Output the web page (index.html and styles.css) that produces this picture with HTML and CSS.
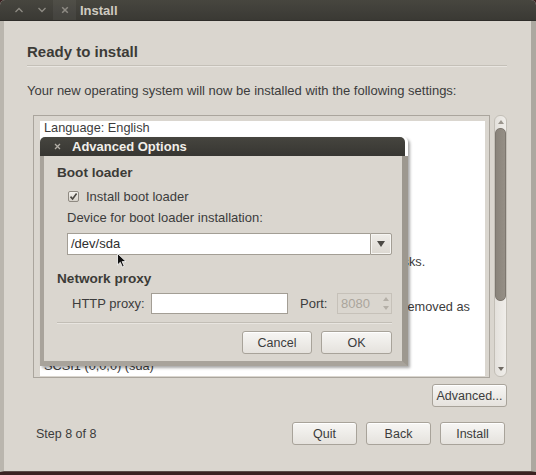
FILE: index.html
```html
<!DOCTYPE html>
<html lang="en">
<head>
<meta charset="utf-8">
<title>Install</title>
<link rel="stylesheet" href="styles.css">
</head>
<body>
<div class="window">
  <div class="titlebar">
    <span class="wbtn"><svg width="10" height="6" viewBox="0 0 10 6"><path d="M1.5 5 L5 1.5 L8.5 5" fill="none" stroke="#8e8b84" stroke-width="1.3"/></svg></span>
    <span class="wbtn"><svg width="10" height="6" viewBox="0 0 10 6"><path d="M1.5 1 L5 4.5 L8.5 1" fill="none" stroke="#8e8b84" stroke-width="1.3"/></svg></span>
    <span class="wbtn close"><svg width="8" height="8" viewBox="0 0 8 8"><path d="M1.2 1.2 L6.8 6.8 M6.8 1.2 L1.2 6.8" fill="none" stroke="#8e8b84" stroke-width="1.5"/></svg></span>
    <span class="wtitle">Install</span>
  </div>
  <div class="main">
    <h1 class="heading">Ready to install</h1>
    <hr class="sep">
    <p class="desc">Your new operating system will now be installed with the following settings:</p>
    <div class="summary">
      <div class="frame">
        <div class="textview">
          <div class="tl">Language: English</div>
          <div class="tl">Keyboard layout: USA</div>
          <div class="tl">Name: Ubuntu User</div>
          <div class="tl">Login name: ubuntu</div>
          <div class="tl">Location: America/New_York</div>
          <div class="tl">Migration Assistant:</div>
          <div class="tl">&nbsp;</div>
          <div class="tl">Partitions:</div>
          <div class="tl">&nbsp;</div>
          <div class="tl">If you continue, the changes listed below will be written to the disks.</div>
          <div class="tl">Otherwise, you will be able to make further changes manually.</div>
          <div class="tl">&nbsp;</div>
          <div class="tl">WARNING: This will destroy all data on any partitions you have removed as</div>
          <div class="tl">well as on the partitions that are going to be formatted.</div>
          <div class="tl">&nbsp;</div>
          <div class="tl">The partition tables of the following devices are changed:</div>
          <div class="tl">SCSI1 (0,0,0) (sda)</div>
        </div>
      </div>
      <div class="vscroll">
        <span class="sarrow"><svg width="6" height="4" viewBox="0 0 6 4"><path d="M0 4 L3 0 L6 4 Z" fill="#9a958d"/></svg></span>
        <div class="thumb"></div>
        <span class="sarrow bottom"><svg width="6" height="4" viewBox="0 0 6 4"><path d="M0 0 L3 4 L6 0 Z" fill="#6f6a63"/></svg></span>
      </div>
    </div>
    <div class="adv-row"><button class="btn adv">Advanced...</button></div>
    <div class="footer">
      <span class="step">Step 8 of 8</span>
      <div class="footer-btns">
        <button class="btn fbtn">Quit</button>
        <button class="btn fbtn">Back</button>
        <button class="btn fbtn">Install</button>
      </div>
    </div>
  </div>

  <div class="dialog">
    <div class="dlg-title">
      <span class="dlg-x"><svg width="7" height="7" viewBox="0 0 7 7"><path d="M1 1 L6 6 M6 1 L1 6" fill="none" stroke="#b3afa7" stroke-width="1.3"/></svg></span>
      <span class="dlg-name">Advanced Options</span>
    </div>
    <div class="dlg-body">
      <div class="sect">Boot loader</div>
      <div class="check-row">
        <span class="checkbox"><svg width="9" height="9" viewBox="0 0 9 9"><path d="M1.5 4.6 L3.6 7 L7.6 1.6" fill="none" stroke="#4a4742" stroke-width="1.6"/></svg></span>
        <span>Install boot loader</span>
      </div>
      <div class="field-label">Device for boot loader installation:</div>
      <div class="combo">
        <div class="combo-entry">/dev/sda</div>
        <div class="combo-btn"><svg width="8" height="6" viewBox="0 0 8 6"><path d="M0 0 L8 0 L4 6 Z" fill="#4c4a45"/></svg></div>
      </div>
      <div class="sect net">Network proxy</div>
      <div class="proxy-row">
        <span class="plabel">HTTP proxy:</span>
        <div class="entry proxy"></div>
        <span class="port-label">Port:</span>
        <div class="spin">
          <span class="spin-val">8080</span>
          <span class="spin-arrows">
            <svg width="6" height="4" viewBox="0 0 6 4"><path d="M0 4 L3 0 L6 4 Z" fill="#b4afa7"/></svg>
            <svg width="6" height="4" viewBox="0 0 6 4"><path d="M0 0 L3 4 L6 0 Z" fill="#b4afa7"/></svg>
          </span>
        </div>
      </div>
      <hr class="dsep">
      <div class="dlg-btns">
        <button class="btn cancel">Cancel</button>
        <button class="btn ok">OK</button>
      </div>
    </div>
  </div>

  <svg class="cursor" width="11" height="16" viewBox="0 0 11 16"><path d="M0.5 0.5 L0.5 12 L3.3 9.3 L5.4 14 L7.2 13.2 L5.2 8.6 L9 8.6 Z" fill="#111" stroke="#fff" stroke-width="0.8"/></svg>
</div>
</body>
</html>
```

FILE: styles.css
```css
* { box-sizing: border-box; }
html, body { margin: 0; padding: 0; }
body {
  width: 536px;
  height: 475px;
  overflow: hidden;
  background: #3b2222;
  font-family: "Liberation Sans", Arial, sans-serif;
  color: #3c3c3c;
}
.window {
  position: relative;
  width: 536px;
  height: 472px;
  display: flex;
  flex-direction: column;
  background: #dad6cf;
  border-radius: 5px 5px 0 0;
  overflow: hidden;
}
.titlebar {
  height: 21px;
  flex: none;
  display: flex;
  align-items: center;
  padding-left: 7px;
  background: linear-gradient(#47463f, #3a3934);
  border-bottom: 1px solid #2e2d29;
}
.wbtn {
  width: 23px;
  height: 20px;
  display: flex;
  align-items: center;
  justify-content: center;
}
.wbtn.close { background: rgba(255, 255, 255, 0.05); }
.wtitle {
  margin-left: 4px;
  font-weight: bold;
  font-size: 13px;
  color: #cfcbc1;
}
.main {
  flex: 1;
  display: flex;
  flex-direction: column;
  border-left: 4px solid #bab6ae;
  border-right: 5px solid #aca8a0;
  border-bottom: 1px solid #5b4a47;
  padding: 0 24px 0 23px;
}
.heading {
  margin: 22px 0 0;
  font-size: 15px;
  line-height: 18px;
  font-weight: bold;
  color: #3c3b37;
}
.sep {
  margin: 4px 0 0;
  height: 2px;
  border: 0;
  border-top: 1px solid #c4c0b8;
  border-bottom: 1px solid #e9e6e1;
}
.desc {
  margin: 16px 0 0;
  font-size: 13px;
  line-height: 15px;
}
.summary {
  margin: 17px 0 0 6px;
  display: flex;
  gap: 4px;
  height: 263px;
  align-items: flex-start;
}
.frame {
  width: 457px;
  height: 263px;
  border: 1px solid #aaa59d;
  padding: 5px 4px 1px 6px;
}
.textview {
  height: 100%;
  background: #fff;
  overflow: hidden;
  padding-left: 4px;
  font-size: 12.75px;
  line-height: 14.9px;
  color: #3c3c3c;
}
.tl { white-space: pre; height: 14.9px; }
.vscroll {
  width: 13px;
  height: 262px;
  border: 1px solid #c3bfb7;
  border-radius: 6px;
  background: linear-gradient(90deg, #e4e1dc, #f0eeea);
  display: flex;
  flex-direction: column;
  align-items: center;
}
.sarrow {
  height: 12px;
  flex: none;
  display: flex;
  align-items: center;
  justify-content: center;
}
.sarrow.bottom { margin-top: auto; height: 14px; }
.thumb {
  width: 11px;
  height: 173px;
  flex: none;
  border-radius: 5px;
  background: linear-gradient(90deg, #8a847b, #958f86);
  border: 1px solid #7d776f;
}
.adv-row {
  margin-top: 6px;
  display: flex;
  justify-content: flex-end;
}
.btn {
  height: 23px;
  padding: 0;
  border: 1px solid #a8a39a;
  border-radius: 3px;
  background: linear-gradient(#f7f6f4, #e5e2dd);
  box-shadow: inset 0 1px 0 #ffffff;
  font-family: "Liberation Sans", Arial, sans-serif;
  font-size: 12.5px;
  color: #3c3c3c;
}
.adv { width: 75px; }
.footer {
  margin-top: 15px;
  display: flex;
  align-items: center;
  justify-content: space-between;
  padding: 0 2px 0 9px;
}
.step { font-size: 12.5px; }
.footer-btns { display: flex; gap: 9px; }
.fbtn { width: 65px; }

/* dialog */
.dialog {
  position: absolute;
  left: 40px;
  top: 137px;
  width: 368px;
  height: 229px;
  display: flex;
  flex-direction: column;
  border-radius: 5px 5px 0 0;
  box-shadow: 2px 2px 3px rgba(0, 0, 0, 0.35);
}
.dlg-title {
  height: 19px;
  flex: none;
  display: flex;
  align-items: center;
  background: linear-gradient(#46453f, #373632);
  border-radius: 5px 5px 0 0;
  margin-right: 3px;
}
.dlg-x {
  width: 24px;
  margin-left: 5px;
  display: flex;
  justify-content: center;
}
.dlg-name {
  margin-left: 3px;
  font-weight: bold;
  font-size: 13px;
  color: #f2efea;
}
.dlg-body {
  flex: 1;
  background: #dad6cf;
  border: 4px solid #a8a39b;
  border-right: 6px solid #9d988f;
  border-bottom-width: 5px;
  border-top: 0;
  padding: 8px 10px 0 13px;
  font-size: 13px;
  display: flex;
  flex-direction: column;
}
.sect {
  font-weight: bold;
  font-size: 13.6px;
  line-height: 17px;
  color: #3c3b37;
}
.sect.net { margin-top: 15px; }
.check-row {
  margin-top: 6px;
  height: 18px;
  display: flex;
  align-items: center;
  padding-left: 11px;
}
.checkbox {
  width: 11px;
  height: 11px;
  margin-right: 7px;
  border: 1px solid #8f8a82;
  border-radius: 2px;
  background: linear-gradient(#f3f1ed, #d6d2ca);
  display: flex;
  align-items: center;
  justify-content: center;
}
.field-label {
  margin-top: 4px;
  line-height: 17px;
  padding-left: 10px;
}
.combo {
  margin: 7px 0 0 10px;
  height: 22px;
  display: flex;
}
.combo-entry {
  flex: 1;
  background: #fff;
  border: 1px solid #a39e95;
  border-right: 0;
  padding-left: 3px;
  line-height: 20px;
  color: #2e2e2e;
}
.combo-btn {
  width: 22px;
  border: 1px solid #a39e95;
  border-radius: 0 2px 2px 0;
  background: linear-gradient(#efede9, #dcd8d1);
  box-shadow: inset 0 0 0 1px #f6f5f2;
  display: flex;
  align-items: center;
  justify-content: center;
}
.proxy-row {
  margin-top: 6px;
  height: 21px;
  display: flex;
  align-items: center;
  padding-left: 15px;
}
.plabel { width: 79px; }
.entry {
  height: 21px;
  background: #fff;
  border: 1px solid #a39e95;
}
.proxy { width: 137px; }
.port-label { width: 37px; margin-left: 12px; }
.spin {
  width: 55px;
  height: 21px;
  border: 1px solid #c6c1b9;
  display: flex;
  align-items: center;
  justify-content: space-between;
  padding-left: 3px;
}
.spin-val { color: #aaa59c; }
.spin-arrows {
  width: 11px;
  height: 19px;
  display: flex;
  flex-direction: column;
  align-items: center;
  justify-content: space-around;
}
.dsep {
  margin: 8px 0 0;
  height: 2px;
  border: 0;
  border-top: 1px solid #c2beb6;
  border-bottom: 1px solid #e8e5e0;
}
.dlg-btns {
  margin-top: 7px;
  display: flex;
  justify-content: flex-end;
  gap: 9px;
}
.cancel { width: 70px; }
.ok { width: 71px; }

.cursor {
  position: absolute;
  left: 117px;
  top: 253px;
}
```
